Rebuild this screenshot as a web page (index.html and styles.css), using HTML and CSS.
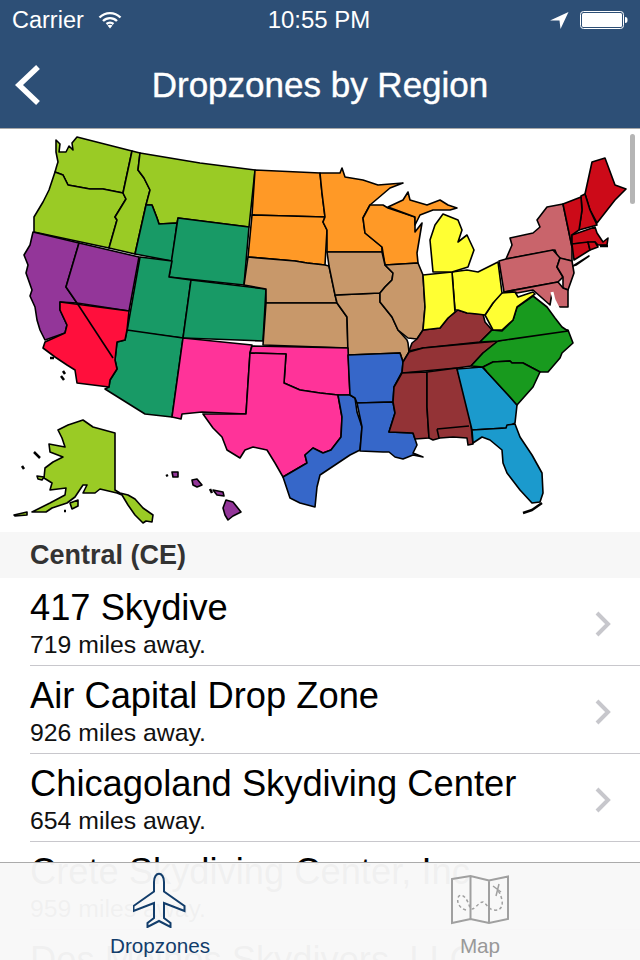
FILE: index.html
```html
<!DOCTYPE html>
<html lang="en">
<head>
<meta charset="utf-8">
<title>Dropzones by Region</title>
<link rel="stylesheet" href="styles.css">
</head>
<body>
<div class="app">
  <header class="nav">
    <div class="status">
      <div class="status-left">
        <span>Carrier</span>
        <svg class="wifi" width="24" height="18" viewBox="0 0 24 18"><path d="M1.5 6.5C7.5 .7 16.500 .7 22.500 6.500M5 10C9 6.200 15 6.200 19 10M8.500 13C10.500 11.300 13.500 11.300 15.500 13" fill="none" stroke="#fff" stroke-width="2.400"/><path d="M12 17.500L9.500 14.500C11 13.400 13 13.400 14.500 14.500Z" fill="#fff"/></svg>
      </div>
      <div class="status-time">10:55 PM</div>
      <div class="status-right">
        <svg width="19" height="17" viewBox="0 0 19 17"><path d="M18.500 0L0 8.500L9.500 8.500L10.500 17Z" fill="#fff"/></svg>
        <svg width="48" height="18" viewBox="0 0 48 18"><rect x=".5" y=".5" width="43" height="17" rx="3" fill="none" stroke="#fff"/><rect x="2" y="2" width="40" height="14" rx="1.500" fill="#fff"/><path d="M45 6C47 6 47.500 7 47.500 9S47 12 45 12Z" fill="#fff"/></svg>
      </div>
    </div>
    <div class="bar">
      <svg class="back" width="26" height="40" viewBox="0 0 26 40"><path d="M23 2L4 20L23 38" fill="none" stroke="#fff" stroke-width="5.500"/></svg>
      <h1 class="title">Dropzones by Region</h1>
    </div>
  </header>

  <main class="content">
    <svg class="map" width="640" height="403" viewBox="0 129 640 403">
      <g class="lime">
        <path d="M56 140L60 144L59 152L66 152L69 146L73 150L72 143L77 137L132 151L123 193L103 189L90 189L68 185L63 175L55 172L57 165L58 162L56 152Z"/>
        <path d="M55 172L63 175L68 185L90 189L103 189L123 193L126 199L115 217L117 220L109 248L34 232L34 217L43 202L49 190Z"/>
        <path d="M132 151L140 153L138 170L144 178L150 190L146 205L135 254L109 248L117 220L115 217L126 199L123 193Z"/>
        <path d="M140 153L200 163L255 170L249 227L178 218L177 223L159 224L157 218L152 205L146 205L150 190L144 178L138 170Z"/>
        <path d="M58 430L68 425L83 420L93 427L115 433L115 490L120 493L128 495L135 499L143 508L153 515L152 522L146 521L143 523L135 515L128 505L122 495L117 493L100 489L95 493L83 493L87 485L83 485L75 497L67 503L52 508L46 512L32 512L50 503L65 495L66 488L50 490L52 483L44 478L45 468L53 462L63 457L50 452L49 444L65 447L62 438Z"/>
        <path d="M70 503L78 500L78 506L72 509Z"/>
        <path d="M37 476L44 477L42 480L38 479Z"/>
        <path d="M14 515L27 512L27 515L15 516Z"/>
      </g>
      <g class="teal">
        <path d="M146 205L152 205L157 218L159 224L177 223L172 261L135 254Z"/>
        <path d="M178 218L249 227L244 285L169 277Z"/>
        <path d="M140 257L172 261L169 277L191 280L183 338L127 331Z"/>
        <path d="M191 280L266 289L263 341L183 338Z"/>
        <path d="M127 330L183 338L172 417L145 414L105 389L109 387L110 380L117 369L115 360L117 342L125 340Z"/>
      </g>
      <g class="purple">
        <path d="M33 232L79 243L66 287L77 303L60 302L60 310L67 325L65 333L45 340L40 330L37 320L35 307L30 296L32 290L26 273L28 265L24 255L30 245Z"/>
        <path d="M79 243L139 257L129 311L77 303L66 287Z"/>
        <path d="M172 472L178 472L178 477L173 477Z"/>
        <path d="M192 480L197 479L202 485L197 487L193 485Z"/>
        <path d="M213 490L223 492L224 496L217 495Z"/>
        <path d="M226 500L233 502L241 512L233 516L228 520L225 515L223 508Z"/>
      </g>
      <path class="red" d="M60 302L129 311L127 330L125 340L117 342L115 360L117 369L110 380L109 387L77 383L75 370L67 365L55 357L43 348L45 342L65 333L67 325L60 310Z"/>
      <path class="line" d="M77 303L113 358"/>
      <g class="orange">
        <path d="M255 170L320 173L322 193L325 217L252 215Z"/>
        <path d="M252 215L325 217L323 222L327 230L325 265L307 263L295 261L248 257Z"/>
        <path d="M320 173L340 173L342 168L345 177L363 180L378 185L403 183L390 188L370 205L363 218L365 233L382 247L382 252L327 252L327 230L323 222L325 217L322 193Z"/>
        <path d="M370 205L383 205L388 208L415 217L415 232L422 223L417 253L418 263L385 265L382 247L365 233L363 218Z"/>
        <path d="M388 207L403 200L408 192L410 200L427 205L440 200L448 205L457 208L450 210L433 210L420 215L415 225L415 217Z"/>
      </g>
      <g class="tan">
        <path d="M248 257L295 261L307 263L325 265L329 266L335 294L337 303L266 303L266 289L244 285Z"/>
        <path d="M266 303L337 303L342 310L347 317L348 348L263 345Z"/>
        <path d="M335 295L380 293L380 302L392 317L398 330L407 340L408 343L409 352L403 362L400 353L348 355L347 317L342 310L337 303Z"/>
        <path d="M327 252L382 252L385 265L393 273L392 280L385 287L380 293L335 295L329 266Z"/>
        <path d="M385 265L418 263L423 275L425 307L423 330L417 339L408 338L398 330L392 317L380 302L380 293L385 287L392 280L393 273Z"/>
      </g>
      <g class="pink">
        <path d="M183 338L252 345L250 353L246 414L202 412L182 414L181 419L172 417Z"/>
        <path d="M252 346L348 348L350 395L338 395L320 393L300 390L284 383L286 354L250 353Z"/>
        <path d="M250 353L286 354L284 383L300 390L320 393L338 395L342 417L341 437L331 450L323 453L313 448L305 455L307 463L283 477L275 463L267 450L253 447L245 450L240 458L227 450L222 437L213 428L203 414L246 414Z"/>
      </g>
      <g class="blue">
        <path d="M338 395L350 395L355 398L357 412L362 427L360 450L350 455L335 465L320 475L317 487L315 507L300 503L290 498L283 477L307 463L305 455L313 448L323 453L331 450L341 437L342 417Z"/>
        <path d="M348 355L400 353L403 362L402 372L394 387L393 402L357 403L355 398L350 395Z"/>
        <path d="M357 403L393 402L395 413L389 432L413 433L417 445L413 453L423 457L413 455L403 459L395 457L389 452L383 452L360 451L362 427Z"/>
      </g>
      <g class="maroon">
        <path d="M409 351L412 343L417 339L423 330L440 328L448 318L458 310L467 313L483 314L485 322L492 330L480 342L423 348Z"/>
        <path d="M409 352L423 348L498 341L483 353L471 366L457 368L402 373L403 362Z"/>
        <path d="M402 373L427 372L427 407L429 438L415 439L413 433L389 432L395 413L393 402L394 387Z"/>
        <path d="M427 372L457 368L468 408L471 425L473 444L468 445L467 438L453 437L440 438L433 440L429 438L427 407Z"/>
      </g>
      <path class="line" d="M437 429L469 426M437 429L439 438"/>
      <g class="sky">
        <path d="M457 369L482 367L487 372L510 397L517 405L515 423L506 428L472 430Z"/>
        <path d="M472 430L506 428L507 425L515 424L520 437L532 455L542 473L543 493L540 502L532 503L520 490L507 473L503 463L502 450L490 440L482 437L473 443Z"/>
      </g>
      <g class="green">
        <path d="M471 366L483 353L498 341L560 330L568 330L573 343L562 353L560 358L548 372L540 372L523 363L512 363L510 361L493 362L483 367Z"/>
        <path d="M483 367L493 362L510 361L512 363L523 363L540 372L533 387L517 405L510 397L487 372Z"/>
        <path d="M480 342L492 330L502 331L513 320L517 307L533 296L547 307L555 318L562 327L568 331L498 341Z"/>
      </g>
      <g class="yellow">
        <path d="M485 315L493 303L500 293L502 293L515 292L518 297L533 292L535 294L517 307L513 320L502 330L493 330Z"/>
        <path d="M452 272L467 270L478 272L498 262L502 293L493 303L485 315L477 314L467 313L458 310L455 310Z"/>
        <path d="M423 275L452 272L455 312L448 318L440 328L423 330L425 307Z"/>
        <path d="M433 272L430 240L435 225L443 214L458 220L462 230L458 242L467 235L474 250L468 267L452 272Z"/>
      </g>
      <g class="rose">
        <path d="M563 204L572 247L572 261L558 258L555 250L506 259L512 245L510 238L533 233L540 227L537 220L547 207Z"/>
        <path d="M499 261L506 259L553 250L560 258L557 267L563 277L558 282L504 292Z"/>
        <path d="M560 258L572 261L574 273L568 290L563 288L563 277L557 267Z"/>
        <path d="M504 292L558 282L563 288L568 290L568 307L557 307L552 293L550 305L533 290L517 293L515 292Z"/>
        <path d="M573 266L589 256L576 265Z"/>
      </g>
      <path class="bay" d="M552 292L554 300L558 308L562 316"/>
      <g class="crimson">
        <path d="M585 194L592 162L605 158L615 185L626 189L615 200L597 223L590 210Z"/>
        <path d="M581 196L585 194L590 210L597 225L579 230L582 210Z"/>
        <path d="M563 204L581 197L582 210L579 230L572 235L572 247Z"/>
        <path d="M572 235L595 227L597 233L603 242L608 238L607 245L598 245L595 242L572 244Z"/>
        <path d="M572 244L588 242L590 250L574 260Z"/>
        <path d="M588 242L595 242L598 247L590 250Z"/>
      </g>
      <path class="keys" d="M523 513L532 510L542 503M50 358H54M63 371L65 374M61 376L64 380M34 452L40 458M22 466L24 469M64 511H66M166 476L168 475M210 489L212 493M600 246H608"/>
    </svg>

    <div class="section">Central (CE)</div>
    <ul class="rows">
      <li class="row"><div class="row-text"><div class="row-title">417 Skydive</div><div class="row-sub">719 miles away.</div></div><svg class="chev" width="18" height="26" viewBox="0 0 18 26"><path d="M3 2L14 13L3 24" fill="none" stroke="#c7c7cc" stroke-width="4"/></svg></li>
      <li class="row"><div class="row-text"><div class="row-title">Air Capital Drop Zone</div><div class="row-sub">926 miles away.</div></div><svg class="chev" width="18" height="26" viewBox="0 0 18 26"><path d="M3 2L14 13L3 24" fill="none" stroke="#c7c7cc" stroke-width="4"/></svg></li>
      <li class="row"><div class="row-text"><div class="row-title">Chicagoland Skydiving Center</div><div class="row-sub">654 miles away.</div></div><svg class="chev" width="18" height="26" viewBox="0 0 18 26"><path d="M3 2L14 13L3 24" fill="none" stroke="#c7c7cc" stroke-width="4"/></svg></li>
      <li class="row"><div class="row-text"><div class="row-title">Crete Skydiving Center, Inc</div><div class="row-sub">959 miles away.</div></div></li>
      <li class="row"><div class="row-text"><div class="row-title">Des Moines Skydivers, LLC</div></div></li>
    </ul>
    <div class="scrollbar"></div>
  </main>

  <nav class="tabs">
    <div class="tab tab-on">
      <svg width="54" height="56" viewBox="133 872 54 56"><path d="M154 882C154 871 164 871 164 882L164 891.500L184.500 906L184.500 911L164 903L164 918L170.500 923L170.500 927L159 921L147.500 927L147.500 923L154 918L154 903L133.500 911L133.500 906L154 891.500Z" fill="none" stroke="#123d6b" stroke-width="2"/></svg>
      <span>Dropzones</span>
    </div>
    <div class="tab">
      <svg width="58" height="56" viewBox="451 872 58 56"><path d="M452 879L470.500 876L489 880.500L508 876.500V919L489 923L470.500 919L452 923ZM470.500 876V919M489 880.500V923" fill="none" stroke="#a0a0a0" stroke-width="2"/><path d="M466 910C458 908 456 900 459 896C463 893 468 900 470 908C474 912 478 902 483 902C487 904 489 910 494 910C501 911 503 906 502 900C501 896 500 893 498 891" fill="none" stroke="#a0a0a0" stroke-width="1.500" stroke-dasharray="3 2.500"/><path d="M493 886L501 892M499 884L496 896" stroke="#a0a0a0" stroke-width="1.500" fill="none"/></svg>
      <span>Map</span>
    </div>
  </nav>
</div>
</body>
</html>
```
FILE: styles.css
```css
* { box-sizing: border-box; }
html, body { margin: 0; padding: 0; }
body { font-family: "Liberation Sans", Arial, sans-serif; background: #fff; }
.app { position: relative; width: 640px; height: 960px; overflow: hidden; background: #fff; }

.nav { height: 129px; background: #2d4f76; border-bottom: 1px solid #a8a8a8; color: #fff; }
.status { height: 40px; padding: 0 12px; display: grid; grid-template-columns: 1fr auto 1fr; align-items: center; font-size: 23.500px; }
.status-left { display: flex; align-items: center; gap: 14px; }
.status-time { font-size: 24px; margin-left: -2px; }
.status-right { display: flex; justify-content: flex-end; align-items: center; gap: 11px; }
.bar { position: relative; height: 88px; display: flex; align-items: center; justify-content: center; }
.back { position: absolute; left: 15px; top: 25px; }
.title { margin: 0; font-size: 35px; font-weight: 400; -webkit-text-stroke: .4px #fff; padding-top: 1px; }

.content { position: relative; }
.map { display: block; filter: blur(.35px); }
.map path { stroke: #000; stroke-width: 1.600; stroke-linejoin: round; }
.map .line, .map .keys { fill: none; }
.map .keys { stroke-width: 2.500; }
.map .bay { fill: none; stroke: #fff; stroke-width: 3; }
.lime path { fill: #9acb25; }
.teal path { fill: #189a66; }
.purple path { fill: #933699; }
.red { fill: #ff0f3c; }
.orange path { fill: #ff9926; }
.tan path { fill: #c8986a; }
.pink path { fill: #ff3399; }
.blue path { fill: #3667c9; }
.maroon path { fill: #933336; }
.sky path { fill: #1b9acd; }
.green path { fill: #189a1e; }
.yellow path { fill: #ffff33; }
.rose path { fill: #c9646b; }
.crimson path { fill: #cc0a18; }

.section { height: 46px; padding-left: 30px; background: #f7f7f7; color: #333; font-size: 27px; font-weight: 700; line-height: 47px; }
.rows { margin: 0; padding: 0; list-style: none; }
.row { position: relative; height: 88px; display: flex; align-items: center; justify-content: space-between; padding: 0 30px; }
.row::after { content: ""; position: absolute; left: 30px; right: 0; bottom: 0; height: 1px; background: #c8c7cc; }
.row-text { align-self: flex-start; padding-top: 10px; }
.row-title { font-size: 36.300px; line-height: 40px; color: #000; white-space: nowrap; }
.row-sub { font-size: 24.800px; line-height: 28px; color: #111; margin-top: 3px; }
.chev { flex: none; margin-right: -2px; margin-top: 3px; }
.scrollbar { position: absolute; right: 5px; top: 5px; width: 5px; height: 70px; border-radius: 3px; background: #b5b5b5; }

.tabs { position: absolute; left: 0; right: 0; bottom: 0; height: 98px; display: flex; background: rgba(248,248,248,.97); border-top: 1px solid #ababab; }
.tab { flex: 1; display: flex; flex-direction: column; align-items: center; color: #999; font-size: 20.700px; padding-top: 9px; }
.tab svg { display: block; height: 56px; }
.tab span { line-height: 24px; margin-top: 6px; }
.tab-on { color: #123d6b; }
```
